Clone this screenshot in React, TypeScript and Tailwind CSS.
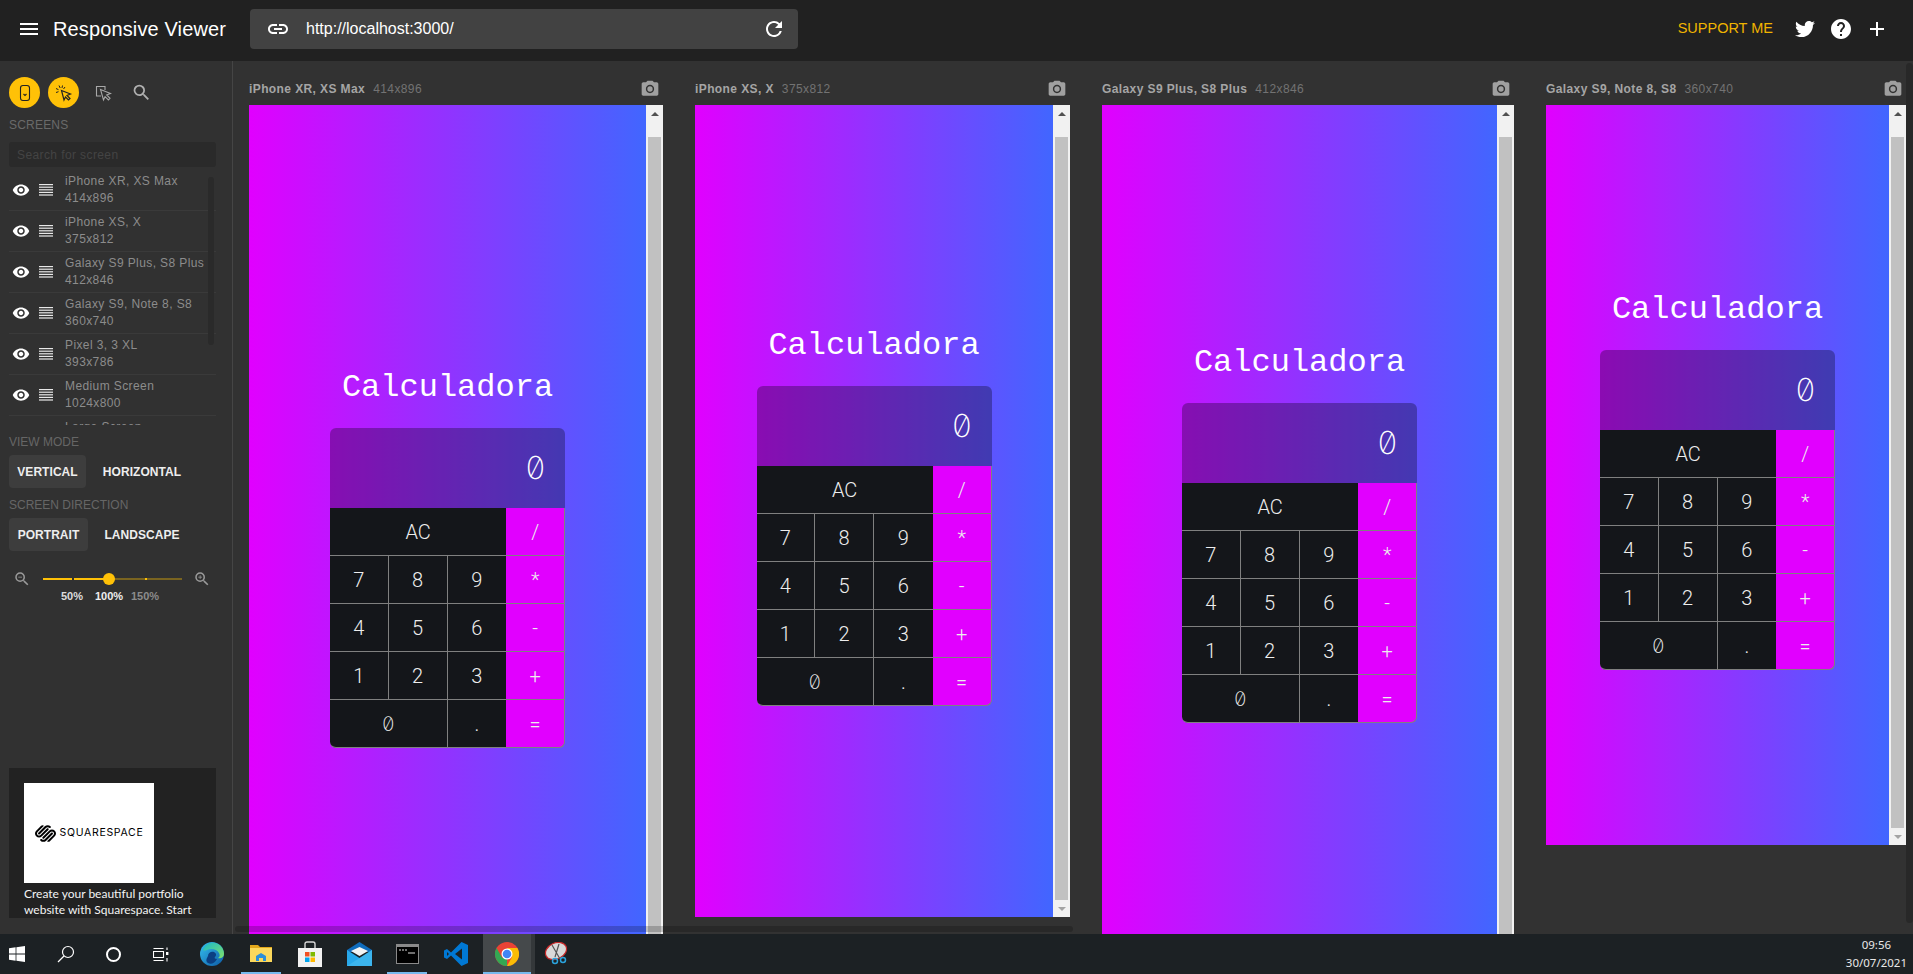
import { FaTwitter } from "react-icons/fa";
import { SiSquarespace } from "react-icons/si";
import {
  MdAdd,
  MdCameraAlt,
  MdHelp,
  MdLink,
  MdMenu,
  MdRefresh,
  MdVisibility,
  MdZoomIn,
  MdZoomOut,
  MdSearch,
} from "react-icons/md";

const screens = [
  ["iPhone XR, XS Max", "414x896"],
  ["iPhone XS, X", "375x812"],
  ["Galaxy S9 Plus, S8 Plus", "412x846"],
  ["Galaxy S9, Note 8, S8", "360x740"],
  ["Pixel 3, 3 XL", "393x786"],
  ["Medium Screen", "1024x800"],
  ["Large Screen", ""],
];

const devices = [
  { name: "iPhone XR, XS Max", size: "414x896", w: "w-[414px]", h: "h-[896px]" },
  { name: "iPhone XS, X", size: "375x812", w: "w-[375px]", h: "h-[812px]" },
  { name: "Galaxy S9 Plus, S8 Plus", size: "412x846", w: "w-[412px]", h: "h-[846px]" },
  { name: "Galaxy S9, Note 8, S8", size: "360x740", w: "w-[360px]", h: "h-[740px]" },
];

const keys = [
  { t: "AC", c: "col-span-3 bg-[#14161a] border-b" },
  { t: "/", c: "bg-[#e100ff] border-b border-r" },
  { t: "7", c: "bg-[#14161a] border-b border-r" },
  { t: "8", c: "bg-[#14161a] border-b border-r" },
  { t: "9", c: "bg-[#14161a] border-b" },
  { t: "*", c: "bg-[#e100ff] border-b border-r" },
  { t: "4", c: "bg-[#14161a] border-b border-r" },
  { t: "5", c: "bg-[#14161a] border-b border-r" },
  { t: "6", c: "bg-[#14161a] border-b" },
  { t: "-", c: "bg-[#e100ff] border-b border-r" },
  { t: "1", c: "bg-[#14161a] border-b border-r" },
  { t: "2", c: "bg-[#14161a] border-b border-r" },
  { t: "3", c: "bg-[#14161a] border-b" },
  { t: "+", c: "bg-[#e100ff] border-b border-r" },
  {
    t: "0",
    c: "col-span-2 bg-[#14161a] border-b border-r rounded-bl-md font-['Inter',sans-serif] font-extralight slashed-zero",
  },
  { t: ".", c: "bg-[#14161a] border-b" },
  { t: "=", c: "bg-[#e100ff] border-b border-r rounded-br-md" },
];

const Calculator = () => (
  <div className="flex min-w-0 flex-1 flex-col items-center justify-center bg-[linear-gradient(to_right,#e100ff,#4166ff)]">
    <div className="flex h-[70px] items-start pt-[10px] font-['Liberation_Mono',monospace] text-[32px] leading-[40px] text-white">
      Calculadora
    </div>
    <div className="grid w-[235px] grid-cols-4 grid-rows-[80px_repeat(5,48px)] font-['Roboto',sans-serif] text-[20px] font-light text-[#eeeeee]">
      <div className="col-span-4 flex items-center justify-end rounded-t-md bg-black/30 pr-5 font-['Inter',sans-serif] text-[32px] font-extralight text-white slashed-zero">
        0
      </div>
      {keys.map((k) => (
        <div
          key={k.t}
          className={`flex items-center justify-center border-[#808080] ${k.c}`}
        >
          {k.t}
        </div>
      ))}
    </div>
  </div>
);

const Scrollbar = () => (
  <div className="flex w-[17px] shrink-0 flex-col bg-[#f1f1f1]">
    <div className="flex h-[17px] shrink-0 items-center justify-center">
      <div className="h-0 w-0 border-x-[4px] border-b-[4px] border-x-transparent border-b-[#505050]" />
    </div>
    <div className="mx-[2px] mt-[15px] flex-1 bg-[#c1c1c1]" />
    <div className="flex h-[17px] shrink-0 items-center justify-center">
      <div className="h-0 w-0 border-x-[4px] border-t-[4px] border-x-transparent border-t-[#a3a3a3]" />
    </div>
  </div>
);

const LinesIcon = () => (
  <svg width="14" height="12" viewBox="0 0 14 12" fill="#e8e8e8">
    <rect y="0" width="14" height="1.2" />
    <rect y="2.6" width="14" height="1.2" />
    <rect y="5.2" width="14" height="1.2" />
    <rect y="7.8" width="14" height="1.2" />
    <rect y="10.4" width="14" height="1.2" />
  </svg>
);

const Sidebar = () => (
  <aside className="flex w-[233px] shrink-0 flex-col border-r border-[#454545] bg-[#313131] pt-4 pr-[16px] pl-[9px]">
    <div className="flex h-[31px] shrink-0 gap-2">
      <div className="flex w-[31px] items-center justify-center rounded-full bg-[#ffc107]">
        <svg width="18" height="18" viewBox="0 0 18 18" fill="none" stroke="#222" strokeWidth="1.1">
          <rect x="4.5" y="1.5" width="9" height="15" rx="2.5" />
          <path d="M7.5 10l1.5 1.5 1.5-1.5" />
        </svg>
      </div>
      <div className="flex w-[31px] items-center justify-center rounded-full bg-[#ffc107]">
        <svg width="18" height="18" viewBox="0 0 18 18" fill="none" stroke="#222" strokeWidth="1.2">
          <path d="M6.500 6.500l9 3.500-3.500 1.500 3 3-1.500 1.500-3-3L9 16z" />
          <path d="M4 1.500l1.200 2.500M1 4.500l2.500 1.200M1 8.500l2.500-.8M7.500 1.500L7 4M10 3L8.500 5" strokeWidth="1" />
        </svg>
      </div>
      <div className="flex w-[31px] items-center justify-center">
        <svg width="18" height="18" viewBox="0 0 18 18" fill="none" stroke="#a8a8a8" strokeWidth="1.1">
          <path d="M7 12H2.500V2.500H11V6" />
          <path d="M6.500 5.500l10 4-3.800 1.500 3.300 3.300-1.600 1.600-3.300-3.300L9.500 16z" fill="#313131" />
        </svg>
      </div>
      <div className="flex w-[31px] items-center justify-center">
        <MdSearch className="text-[21px] text-[#b0b0b0]" />
      </div>
    </div>
    <div className="mt-[9px] h-4 text-[12px] leading-4 tracking-[0.2px] text-[#6a6a6a]">SCREENS</div>
    <div className="mt-[9px] flex h-[25px] shrink-0 items-center rounded-[3px] bg-[#2a2a2a] px-2 text-[12px] tracking-[0.4px] text-[#444444]">
      Search for screen
    </div>
    <div className="relative mt-[3px] h-[255px] shrink-0 overflow-hidden">
      {screens.map(([name, size]) => (
        <div key={name} className="flex h-[41px] items-center border-b border-[#3a3a3a]">
          <MdVisibility className="ml-[3px] w-[18px] text-[18px] text-white" />
          <div className="ml-[8px] flex w-[16px] justify-center">
            <LinesIcon />
          </div>
          <div className="ml-[11px] text-[12px] leading-[17px] tracking-[0.4px] text-[#8c8c8c]">
            <div className="whitespace-nowrap">{name}</div>
            <div>{size || "\u00a0"}</div>
          </div>
        </div>
      ))}
      <div className="absolute top-[7px] right-[2px] h-[168px] w-[6px] rounded-full bg-[#2a2a2a]" />
    </div>
    <div className="mt-[9px] h-4 text-[12px] leading-4 text-[#666666]">VIEW MODE</div>
    <div className="mt-[5px] flex h-[33px] shrink-0 text-[12px] font-bold tracking-[0.05px] text-[#eeeeee]">
      <div className="flex w-[77px] items-center justify-center rounded-[4px] bg-[#3d3d3d]">VERTICAL</div>
      <div className="flex w-[112px] items-center justify-center">HORIZONTAL</div>
    </div>
    <div className="mt-[9px] h-4 text-[12px] leading-4 text-[#666666]">SCREEN DIRECTION</div>
    <div className="mt-[5px] flex h-[33px] shrink-0 text-[12px] font-bold tracking-[0.05px] text-[#eeeeee]">
      <div className="flex w-[79px] items-center justify-center rounded-[4px] bg-[#3d3d3d]">PORTRAIT</div>
      <div className="flex w-[108px] items-center justify-center">LANDSCAPE</div>
    </div>
    <div className="mt-[17px] flex h-[22px] shrink-0 items-center">
      <MdZoomOut className="ml-[4px] text-[18px] text-[#9a9a9a]" />
      <div className="relative ml-[12px] h-[2px] w-[139px] bg-[#7a6420]">
        <div className="h-full w-[66px] bg-[#ffc107]" />
        <div className="absolute top-0 left-[29px] h-[2px] w-[2px] bg-[#313131]" />
        <div className="absolute top-0 left-[102px] h-[2px] w-[2px] bg-[#ffc107]" />
        <div className="absolute top-[-5px] left-[60px] h-3 w-3 rounded-full bg-[#ffc107]" />
      </div>
      <MdZoomIn className="ml-[11px] text-[18px] text-[#9a9a9a]" />
    </div>
    <div className="relative mt-[-2px] h-4 shrink-0 text-[11px] leading-4 font-bold">
      <span className="absolute left-[52px] text-[#dddddd]">50%</span>
      <span className="absolute left-[86px] text-[#eeeeee]">100%</span>
      <span className="absolute left-[122px] text-[#8c8c8c]">150%</span>
    </div>
    <div className="mt-[164px] h-[150px] shrink-0 overflow-hidden bg-[#222222] pt-[15px] pl-[15px]">
      <div className="flex h-[100px] w-[130px] items-center justify-center gap-[4px] bg-white text-black">
        <SiSquarespace className="text-[21px]" />
        <span className="font-['Inter',sans-serif] text-[10.5px] font-normal tracking-[0.7px]">SQUARESPACE</span>
      </div>
      <div className="mt-[3px] w-[180px] font-['Lato',sans-serif] text-[12px] leading-[16px] text-[#f4f4f4]">
        Create your beautiful portfolio website with Squarespace. Start
      </div>
    </div>
  </aside>
);

const Taskbar = () => (
  <div className="flex h-10 shrink-0 items-center bg-[#1c2124] text-white">
    <div className="flex w-[34px] justify-center">
      <svg width="16" height="16" viewBox="0 0 16 16" fill="#fff">
        <path d="M0 2.200l6.600-.9v6.300H0zM7.400 1.200L16 0v7.600H7.400zM0 8.400h6.600v6.300L0 13.800zM7.400 8.400H16V16l-8.600-1.200z" />
      </svg>
    </div>
    <div className="ml-[15px] flex w-[34px] justify-center">
      <svg width="18" height="18" viewBox="0 0 18 18" fill="none" stroke="#fff" strokeWidth="1.2">
        <circle cx="11" cy="7" r="5.5" />
        <path d="M7 11l-6 6" />
      </svg>
    </div>
    <div className="ml-[13px] flex w-[34px] justify-center">
      <div className="h-[15px] w-[15px] rounded-full border-2 border-white" />
    </div>
    <div className="ml-[14px] flex w-[34px] justify-center">
      <svg width="16" height="15" viewBox="0 0 16 15" fill="none" stroke="#fff" strokeWidth="1.1">
        <path d="M0.500 4.500h10v6h-10zM0.500 1.500h10M0.500 13.500h10M14 .5v2.500M14 11v3.500" />
        <rect x="13" y="5" width="2.4" height="3" fill="#fff" stroke="none" />
      </svg>
    </div>
    {/* edge */}
    <div className="ml-[17px] flex h-full w-[34px] items-center justify-center">
      <svg width="24" height="24" viewBox="0 0 24 24">
        <defs>
          <linearGradient id="edgeA" x1="0" y1="0" x2="1" y2="1">
            <stop offset="0" stopColor="#35c1f1" />
            <stop offset="1" stopColor="#0c59a4" />
          </linearGradient>
          <linearGradient id="edgeB" x1="0" y1="0" x2="1" y2="1">
            <stop offset="0" stopColor="#1bb9c9" />
            <stop offset="1" stopColor="#7fe06a" />
          </linearGradient>
        </defs>
        <circle cx="12" cy="12" r="12" fill="url(#edgeA)" />
        <path d="M3 8C5 2 11 0 15 1c5 1 9 5 9 11 0 3-3 5-6 4 2-1 2-3 1-5-2-4-8-5-12-3-2 1-3 1-4 0z" fill="url(#edgeB)" />
        <path d="M8 14c0-3 3-5 6-4 2 1 3 3 1 5-1 1 0 2 2 2-2 4-6 6-9 4-3-2-1-5 0-7z" fill="#0b3f82" />
      </svg>
    </div>
    {/* explorer */}
    <div className="relative ml-[12px] flex h-full w-[40px] items-center justify-center">
      <svg width="22" height="20" viewBox="0 0 22 20">
        <path d="M0 1h8l2 2h12v15H0z" fill="#e3a81b" />
        <rect y="4" width="22" height="14" fill="#fbd85c" />
        <path d="M6 17v-5l5-3 5 3v5h-3v-3H9v3z" fill="#2d8fd8" />
      </svg>
      <div className="absolute right-0 bottom-0 left-0 h-[2px] bg-[#76b9ed]" />
    </div>
    {/* store */}
    <div className="ml-[9px] flex h-full w-[40px] items-center justify-center">
      <svg width="24" height="26" viewBox="0 0 24 26">
        <path d="M7 7V3a2 2 0 012-2h6a2 2 0 012 2v4" fill="none" stroke="#d8d8d8" strokeWidth="1.4" />
        <rect y="7" width="24" height="19" fill="#f2f2f2" />
        <rect x="7" y="11" width="4.5" height="4.5" fill="#f25022" />
        <rect x="12.5" y="11" width="4.5" height="4.5" fill="#7fba00" />
        <rect x="7" y="16.5" width="4.5" height="4.5" fill="#00a4ef" />
        <rect x="12.5" y="16.5" width="4.5" height="4.5" fill="#ffb900" />
      </svg>
    </div>
    {/* mail */}
    <div className="ml-[9px] flex h-full w-[40px] items-center justify-center">
      <svg width="25" height="24" viewBox="0 0 25 24">
        <path d="M0 8l12.500-8L25 8v2H0z" fill="#0f6cbd" />
        <path d="M4 9l8.500-4L21 9l-8.500 5z" fill="#f4f4f4" />
        <path d="M0 8l12.500 8L25 8v16H0z" fill="#28a8ea" />
        <path d="M0 24l25-16v16z" fill="#50c2f2" opacity="0.5" />
      </svg>
    </div>
    {/* terminal */}
    <div className="relative ml-[8px] flex h-full w-[40px] items-center justify-center">
      <div className="flex h-[20px] w-[23px] flex-col border border-[#8a8a8a] bg-black">
        <div className="h-[2px] bg-[#8a8a8a]" />
        <svg width="21" height="14" viewBox="0 0 21 14" fill="none" stroke="#ddd">
          <path d="M2 3h2M5 3h2M8 3h2M11 6h7" />
        </svg>
      </div>
      <div className="absolute right-0 bottom-0 left-0 h-[2px] bg-[#76b9ed]" />
    </div>
    {/* vscode */}
    <div className="ml-[9px] flex h-full w-[40px] items-center justify-center">
      <svg width="24" height="24" viewBox="0 0 24 24">
        <path d="M17.500 0L24 3v18l-6.500 3L7 13.500 3 17l-3-1.500v-7L3 7l4 3.500z" fill="#0078d4" />
        <path d="M18 6.500L11 12l7 5.500z" fill="#1c2124" />
        <path d="M3 10v4l2-2z" fill="#1c2124" />
      </svg>
    </div>
    {/* chrome */}
    <div className="relative ml-[7px] flex h-full w-[48px] items-center justify-center bg-[#45494b]">
      <svg width="24" height="24" viewBox="0 0 24 24">
        <circle cx="12" cy="12" r="12" fill="#ea4335" />
        <path d="M12 24A12 12 0 011.600 6L7 15.500 12 17z" fill="#34a853" />
        <path d="M12 24a12 12 0 0010.400-18H12l5 9z" fill="#fbbc05" />
        <circle cx="12" cy="12" r="5.500" fill="#fff" />
        <circle cx="12" cy="12" r="4.300" fill="#4285f4" />
      </svg>
      <div className="absolute right-0 bottom-0 left-0 h-[2px] bg-[#76b9ed]" />
      <div className="absolute top-0 right-[-4px] bottom-0 w-[4px] bg-[#34383a]" />
    </div>
    {/* snipping */}
    <div className="ml-[1px] flex h-full w-[48px] items-center justify-center">
      <svg width="24" height="24" viewBox="0 0 24 24">
        <ellipse cx="12" cy="9" rx="11" ry="8" transform="rotate(-25 12 9)" fill="#d9d9d9" stroke="#c62828" strokeWidth="1.200" />
        <path d="M8 3l8 14M15 2l-4 13" stroke="#555" strokeWidth="1.200" />
        <circle cx="11" cy="19" r="2.500" fill="none" stroke="#2aa3dd" strokeWidth="1.500" />
        <circle cx="19" cy="18" r="2.500" fill="none" stroke="#2aa3dd" strokeWidth="1.500" />
      </svg>
    </div>
    <div className="ml-auto flex flex-col items-center pr-[6px] font-['Noto_Sans',sans-serif] text-[11.5px] leading-[18px] text-[#e8e8e8]">
      <span>09:56</span>
      <span>30/07/2021</span>
    </div>
  </div>
);

const App = () => {
  return (
    <div className="flex h-[974px] w-[1913px] flex-col overflow-hidden font-['Liberation_Sans',Arial,sans-serif]">
      {/* barra superior */}
      <header className="flex h-[61px] shrink-0 items-center bg-[#212121] pb-[3px] text-white">
        <MdMenu className="ml-[17px] text-[24px]" />
        <div className="ml-[12px] w-[197px] text-[20px] tracking-[0.13px]">Responsive Viewer</div>
        <div className="flex h-10 w-[548px] items-center rounded-[4px] bg-[#424242] pr-[12px] pl-[16px]">
          <MdLink className="text-[24px]" />
          <div className="ml-[16px] flex-1 text-[16px]">http://localhost:3000/</div>
          <MdRefresh className="text-[24px]" />
        </div>
        <div className="ml-auto text-[14.5px] text-[#f0b400]">SUPPORT ME</div>
        <FaTwitter className="ml-[22px] text-[20px]" />
        <MdHelp className="ml-[14px] text-[24px]" />
        <MdAdd className="mr-[24px] ml-[12px] text-[24px]" />
      </header>

      <div className="flex min-h-0 flex-1">
        <Sidebar />
        <main className="relative min-w-0 flex-1 overflow-hidden bg-[#323232] pl-[16px]">
          <div className="flex items-start gap-8">
            {devices.map((d) => (
              <div key={d.name} className={`shrink-0 ${d.w}`}>
                <div className="flex h-[44px] items-center pt-[12px] text-[12px]">
                  <span className="font-bold tracking-[0.4px] text-[#a5a5a5]">{d.name}</span>
                  <span className="ml-[8px] tracking-[0.4px] text-[#737373]">{d.size}</span>
                  <MdCameraAlt className="mr-[3px] ml-auto text-[20px] text-[#a0a0a0]" />
                </div>
                <div className={`flex ${d.h}`}>
                  <Calculator />
                  <Scrollbar />
                </div>
              </div>
            ))}
          </div>
          <div className="absolute bottom-[2px] left-[2px] h-[6px] w-[838px] rounded-full bg-black/20" />
          <div className="absolute top-[2px] right-0 h-[860px] w-[7px] rounded-full bg-black/20" />
        </main>
      </div>
      <Taskbar />
    </div>
  );
};

export default App;
